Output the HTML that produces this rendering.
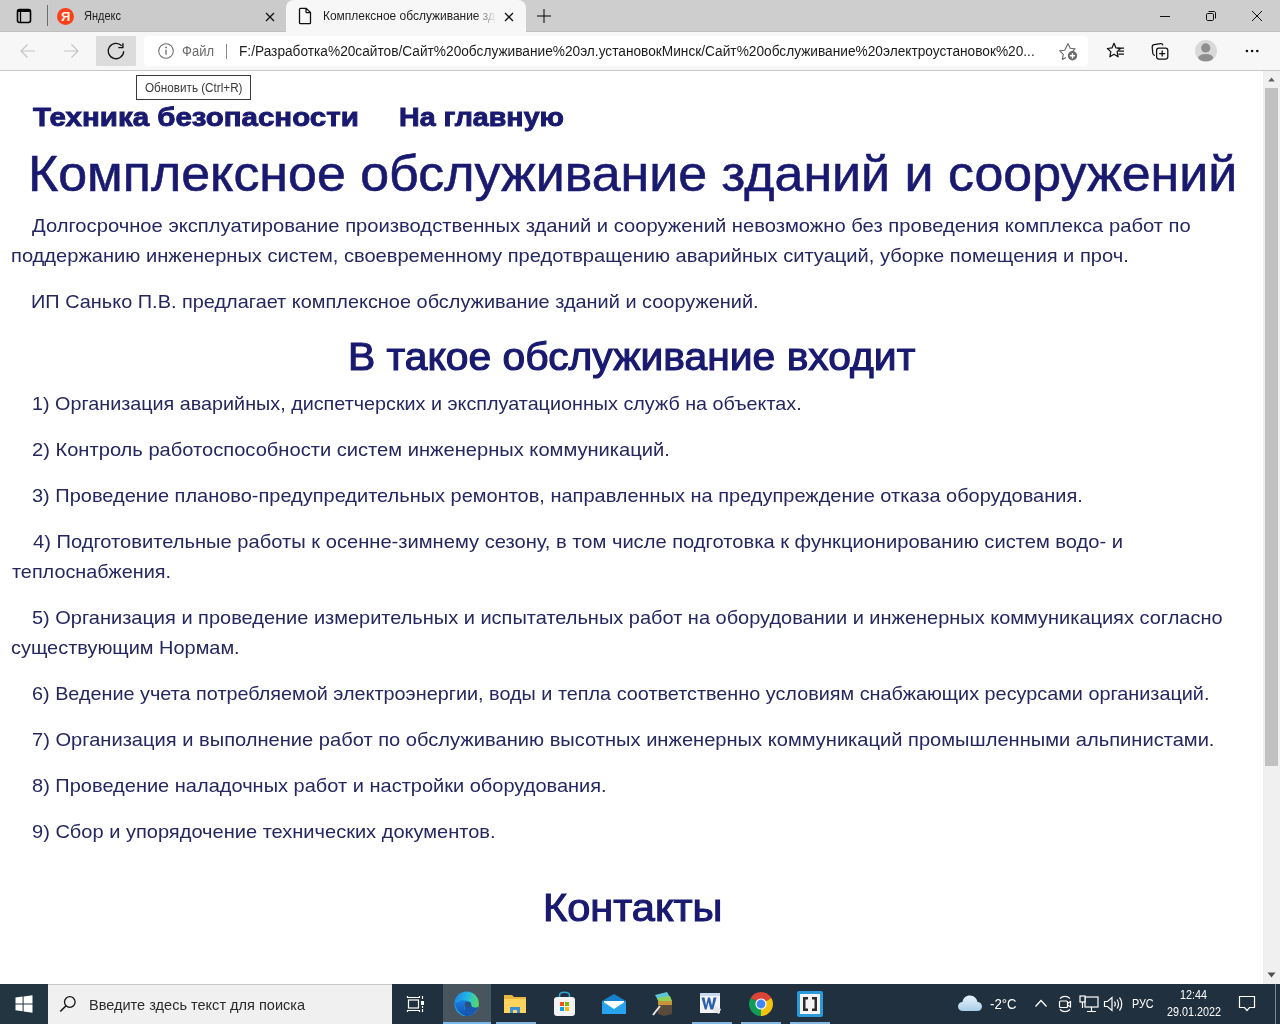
<!DOCTYPE html>
<html><head><meta charset="utf-8"><title>Комплексное обслуживание</title>
<style>
html,body{margin:0;padding:0}
body{width:1280px;height:1024px;position:relative;overflow:hidden;background:#fff;font-family:"Liberation Sans",sans-serif}
.a{position:absolute}
.t{position:absolute;white-space:nowrap;line-height:1;transform-origin:0 0}
.b{font-size:19.0px;color:#262660}
.h{color:#191970}
</style></head><body>

<!-- ===== TAB STRIP ===== -->
<div class="a" style="left:0;top:0;width:1280px;height:32px;background:#cecece"></div><div class="a" style="left:0;top:31px;width:1280px;height:1px;background:#bfbfbf"></div>
<!-- tab actions icon -->
<svg class="a" style="left:16px;top:8px" width="16" height="16" viewBox="0 0 16 16"><rect x="1.5" y="1.5" width="13" height="13" rx="2" fill="none" stroke="#000" stroke-width="1.6"/><rect x="1.5" y="1.5" width="13" height="2.5" fill="#000"/><line x1="4.5" y1="3" x2="4.5" y2="14" stroke="#000" stroke-width="1.3"/></svg>
<div class="a" style="left:47px;top:5px;width:1px;height:21px;background:#6d6d6d"></div>
<!-- inactive tab -->
<div class="a" style="left:49px;top:0;width:237px;height:31px;background:#cbcbcb;border-radius:0 0 5px 0"></div>
<div class="a" style="left:57px;top:8px;width:17px;height:17px;border-radius:50%;background:#fc3f1d"></div><div class="t" style="left:61px;top:10px;font-size:13px;font-weight:bold;color:#fff5e0">Я</div>
<div class="t" style="left:84px;top:10px;font-size:12px;color:#1e1e1e;transform:scaleX(0.917)">Яндекс</div>
<svg class="a" style="left:265px;top:12px" width="10" height="10" viewBox="0 0 10 10"><path d="M1 1L9 9M9 1L1 9" stroke="#111" stroke-width="1.3"/></svg>
<!-- active tab -->
<div class="a" style="left:286px;top:0;width:240px;height:40px;background:#f7f7f7;border-radius:8px 8px 0 0"></div>
<svg class="a" style="left:298px;top:7px" width="14" height="18" viewBox="0 0 14 18"><path d="M1.5 2.2c0-.5.4-.9.9-.9h5.8l4.3 4.3v10.2c0 .5-.4.9-.9.9H2.4c-.5 0-.9-.4-.9-.9z M8 1.5v3.3c0 .5.4.9.9.9h3.4" fill="none" stroke="#111" stroke-width="1.3"/></svg>
<div style="position:absolute;left:323px;top:0;width:174px;height:32px;overflow:hidden;-webkit-mask-image:linear-gradient(90deg,#000 152px,transparent 173px)"><div class="t" style="left:0;top:10px;font-size:12px;color:#1e1e1e;transform:scaleX(0.997)">Комплексное обслуживание здан</div></div>
<svg class="a" style="left:504px;top:12px" width="10" height="10" viewBox="0 0 10 10"><path d="M1 1L9 9M9 1L1 9" stroke="#111" stroke-width="1.3"/></svg>
<svg class="a" style="left:536px;top:8px" width="16" height="16" viewBox="0 0 16 16"><path d="M8 1V15M1 8H15" stroke="#000" stroke-width="1"/></svg>
<!-- window controls -->
<div class="a" style="left:1160px;top:16px;width:10px;height:1px;background:#111"></div>
<svg class="a" style="left:1205px;top:10px" width="12" height="12" viewBox="0 0 12 12"><rect x="1.5" y="3.5" width="7" height="7" rx="1.2" fill="none" stroke="#111" stroke-width="1"/><path d="M3.5 1.5H9c.8 0 1.5.7 1.5 1.5V8.5" fill="none" stroke="#111" stroke-width="1"/></svg>
<svg class="a" style="left:1251px;top:10px" width="12" height="12" viewBox="0 0 12 12"><path d="M1 1L11 11M11 1L1 11" stroke="#111" stroke-width="1"/></svg>

<!-- ===== TOOLBAR ===== -->
<div class="a" style="left:0;top:32px;width:1280px;height:38px;background:#f7f7f7"></div>
<div class="a" style="left:0;top:70px;width:1280px;height:1px;background:#c6c6c6"></div>
<svg class="a" style="left:19px;top:42px" width="18" height="18" viewBox="0 0 18 18"><path d="M16 9H2M8.5 2.5L2 9l6.5 6.5" fill="none" stroke="#c4c4c4" stroke-width="1.2"/></svg>
<svg class="a" style="left:62px;top:42px" width="18" height="18" viewBox="0 0 18 18"><path d="M2 9h14M9.5 2.5L16 9l-6.5 6.5" fill="none" stroke="#c4c4c4" stroke-width="1.2"/></svg>
<div class="a" style="left:96px;top:36px;width:40px;height:30px;background:#dcdcdc;border-radius:1px"></div>
<svg class="a" style="left:107px;top:42px" width="18" height="18" viewBox="0 0 18 18"><path d="M16.7 9.3A7.7 7.7 0 1 1 14.6 3.7" fill="none" stroke="#111" stroke-width="1.3"/><path d="M15.9 1.2V5.6H11.3" fill="none" stroke="#111" stroke-width="1.4"/></svg>
<div class="a" style="left:144px;top:36px;width:944px;height:30px;background:#fff;border-radius:4px"></div>
<svg class="a" style="left:157px;top:42px" width="18" height="18" viewBox="0 0 18 18"><circle cx="9" cy="9" r="7.3" fill="none" stroke="#6e6e6e" stroke-width="1.1"/><path d="M9 7.8v5" stroke="#6e6e6e" stroke-width="1.3"/><circle cx="9" cy="5.4" r=".9" fill="#6e6e6e"/></svg>
<div class="t" style="left:182px;top:44px;font-size:14px;color:#6c6c6c;transform:scaleX(0.93)">Файл</div>
<div class="a" style="left:226px;top:44px;width:1px;height:15px;background:#8a8a8a"></div>
<div class="t" style="left:239px;top:44px;font-size:14px;color:#1b1b1b;transform:scaleX(0.978)">F:/Разработка%20сайтов/Сайт%20обслуживание%20эл.установокМинск/Сайт%20обслуживание%20электроустановок%20...</div>
<svg class="a" style="left:1057px;top:41px" width="22" height="22" viewBox="0 0 22 22"><path d="M11 2.6l2.2 4.6 4.9.7-3.5 3.4.3 1.6M9 16.5l-3.6 1.9.9-5-3.6-3.5 5-.7L11 2.6" fill="none" stroke="#6b6b6b" stroke-width="1.15" stroke-linejoin="round"/><circle cx="15.5" cy="14.8" r="4.7" fill="#6b6b6b"/><path d="M15.5 12.2v5.2M12.9 14.8h5.2" stroke="#fff" stroke-width="1.4"/></svg>
<svg class="a" style="left:1106px;top:42px" width="20" height="18" viewBox="0 0 20 18"><path d="M8 1.3l2 4.6 4.4.6-3.3 3.1 1 5.2L8 12.3l-4.1 2.5.9-5.2L1.4 6.5l4.6-.6z" fill="none" stroke="#111" stroke-width="1.25" stroke-linejoin="round"/><path d="M11.5 6.2h6.5M12.5 9.2h5.5M12.5 12.2h5.5" stroke="#111" stroke-width="1.25"/></svg>
<svg class="a" style="left:1151px;top:42px" width="19" height="19" viewBox="0 0 19 19"><path d="M4 13.5C2.8 13.4 2 12.5 1.8 11.4L1.2 5.3c-.1-1.3.8-2.4 2.1-2.6l6.2-1c1.2-.2 2.2.5 2.5 1.6" fill="none" stroke="#111" stroke-width="1.25"/><rect x="5.6" y="6.2" width="11.2" height="10.8" rx="2.2" fill="none" stroke="#111" stroke-width="1.25"/><path d="M11.2 8.6v6M8.2 11.6h6" stroke="#111" stroke-width="1.3"/></svg>
<svg class="a" style="left:1195px;top:40px" width="22" height="22" viewBox="0 0 22 22"><circle cx="11" cy="11" r="11" fill="#d9d9d9"/><circle cx="10.7" cy="7.9" r="4.6" fill="#8e8e8e"/><ellipse cx="10.7" cy="17.6" rx="7.4" ry="3.7" fill="#8e8e8e"/></svg>
<svg class="a" style="left:1242px;top:48px" width="20" height="6" viewBox="0 0 20 6"><circle cx="4.9" cy="3" r="1.3" fill="#111"/><circle cx="10.1" cy="3" r="1.3" fill="#111"/><circle cx="15.3" cy="3" r="1.3" fill="#111"/></svg>

<!-- ===== CONTENT ===== -->
<div id="content">
<div class="t h" style="left:33px;top:104px;transform:scaleX(1.134);font-size:26px;font-weight:bold;-webkit-text-stroke:0.9px #191970">Техника безопасности</div>
<div class="t h" style="left:399px;top:104px;transform:scaleX(1.1);font-size:26px;font-weight:bold;-webkit-text-stroke:0.9px #191970">На главную</div>
<div class="t h" style="left:28px;top:149px;transform:scaleX(1.0383);font-size:50px;-webkit-text-stroke:0.6px #191970">Комплексное обслуживание зданий и сооружений</div>

<div class="t b" style="left:32.4px;top:216px;transform:scaleX(1.0623)">Долгосрочное эксплуатирование производственных зданий и сооружений невозможно без проведения комплекса работ по</div>
<div class="t b" style="left:11.4px;top:246px;transform:scaleX(1.0572)">поддержанию инженерных систем, своевременному предотвращению аварийных ситуаций, уборке помещения и проч.</div>
<div class="t b" style="left:30.8px;top:292px;transform:scaleX(1.0483)">ИП Санько П.В. предлагает комплексное обслуживание зданий и сооружений.</div>

<div class="t h" style="left:348px;top:338px;transform:scaleX(1.074);font-size:38px;-webkit-text-stroke:1.1px #191970">В такое обслуживание входит</div>

<div class="t b" style="left:32.0px;top:394px;transform:scaleX(1.0405)">1) Организация аварийных, диспетчерских и эксплуатационных служб на объектах.</div>
<div class="t b" style="left:31.8px;top:440px;transform:scaleX(1.0586)">2) Контроль работоспособности систем инженерных коммуникаций.</div>
<div class="t b" style="left:31.8px;top:486px;transform:scaleX(1.0517)">3) Проведение планово-предупредительных ремонтов, направленных на предупреждение отказа оборудования.</div>
<div class="t b" style="left:32.8px;top:532px;transform:scaleX(1.0594)">4) Подготовительные работы к осенне-зимнему сезону, в том числе подготовка к функционированию систем водо- и</div>
<div class="t b" style="left:12.4px;top:562px;transform:scaleX(1.0434)">теплоснабжения.</div>
<div class="t b" style="left:31.8px;top:608px;transform:scaleX(1.0518)">5) Организация и проведение измерительных и испытательных работ на оборудовании и инженерных коммуникациях согласно</div>
<div class="t b" style="left:11.4px;top:638px;transform:scaleX(1.0487)">существующим Нормам.</div>
<div class="t b" style="left:31.8px;top:684px;transform:scaleX(1.0433)">6) Ведение учета потребляемой электроэнергии, воды и тепла соответственно условиям снабжающих ресурсами организаций.</div>
<div class="t b" style="left:31.8px;top:730px;transform:scaleX(1.0576)">7) Организация и выполнение работ по обслуживанию высотных инженерных коммуникаций промышленными альпинистами.</div>
<div class="t b" style="left:31.8px;top:776px;transform:scaleX(1.0532)">8) Проведение наладочных работ и настройки оборудования.</div>
<div class="t b" style="left:31.8px;top:822px;transform:scaleX(1.0544)">9) Сбор и упорядочение технических документов.</div>

<div class="t h" style="left:543px;top:888px;transform:scaleX(1.065);font-size:39px;-webkit-text-stroke:1.1px #191970">Контакты</div>
</div>

<!-- ===== TOOLTIP ===== -->
<div class="a" style="left:136px;top:75px;width:113px;height:23px;border:1px solid #3a3a3a;background:#fff"></div>
<div class="t" style="left:145px;top:82px;font-size:12px;color:#383838;transform:scaleX(0.975)">Обновить (Ctrl+R)</div>

<!-- ===== SCROLLBAR ===== -->
<div class="a" style="left:1263px;top:71px;width:17px;height:913px;background:#f0f0f0"></div>
<svg class="a" style="left:1263px;top:73px" width="17" height="12" viewBox="0 0 17 12"><path d="M5.2 8.6L8.5 4.6 11.8 8.6z" fill="#606060"/></svg>
<div class="a" style="left:1265px;top:88px;width:13px;height:678px;background:#c1c1c1"></div>
<svg class="a" style="left:1263px;top:970px" width="17" height="12" viewBox="0 0 17 12"><path d="M4.5 2.5L8.5 7.5 12.5 2.5z" fill="#505050"/></svg>

<!-- ===== TASKBAR ===== -->
<div class="a" style="left:0;top:984px;width:1280px;height:40px;background:#20303f"></div>
<div class="a" style="left:0;top:984px;width:48px;height:40px;background:#233540"></div>
<svg class="a" style="left:15px;top:995px" width="18" height="18" viewBox="0 0 18 18"><path d="M0.5 2.6L7.6 1.6V8.4H0.5z M8.6 1.4L17.5 0.2V8.4H8.6z M0.5 9.4H7.6V16.3L0.5 15.3z M8.6 9.4H17.5V17.7L8.6 16.5z" fill="#fff"/></svg>
<div class="a" style="left:48px;top:984px;width:344px;height:40px;background:#f0f0f0;box-shadow:inset 0 1px 0 #c9c9c9"></div>
<svg class="a" style="left:58px;top:994px" width="20" height="20" viewBox="0 0 20 20"><circle cx="11.8" cy="8" r="5.3" fill="none" stroke="#111" stroke-width="1.3"/><path d="M8 11.8L2.3 17.5" stroke="#111" stroke-width="1.5"/></svg>
<div class="t" style="left:89px;top:997px;font-size:15px;color:#2b2b2b;transform:scaleX(0.969)">Введите здесь текст для поиска</div>
<!-- task view -->
<svg class="a" style="left:406px;top:995px" width="20" height="18" viewBox="0 0 20 18"><path d="M1.5 1v1.5h12V1M1.5 17v-1.5h12V17" fill="none" stroke="#fff" stroke-width="1.2"/><rect x="2.5" y="5" width="10" height="8" fill="none" stroke="#fff" stroke-width="1.2"/><path d="M16.5 1v3M16.5 14v3" stroke="#fff" stroke-width="1.2"/><rect x="15" y="6" width="3" height="4" fill="#fff"/><path d="M16.5 11v2" stroke="#fff" stroke-width="1.2"/></svg>
<!-- edge -->
<div class="a" style="left:443px;top:984px;width:48px;height:40px;background:#48555f"></div>
<div class="a" style="left:443px;top:1022px;width:48px;height:2px;background:#7db8ec"></div>
<svg class="a" style="left:454px;top:991px" width="26" height="26" viewBox="0 0 26 26"><defs><linearGradient id="eg1" x1="0" y1=".3" x2="1" y2=".6"><stop offset="0" stop-color="#1b86e6"/><stop offset=".45" stop-color="#22b6e6"/><stop offset=".75" stop-color="#3fd09a"/><stop offset="1" stop-color="#62d655"/></linearGradient><linearGradient id="eg2" x1="0" y1="0" x2="0" y2="1"><stop offset="0" stop-color="#1a7fe0"/><stop offset="1" stop-color="#134fae"/></linearGradient></defs><circle cx="12.6" cy="12.8" r="12.3" fill="url(#eg1)"/><path d="M1 11.5C1.5 17.5 6 24.5 12.6 25.1c3.5.2 7-1.2 9.3-3.6-3 1.2-6.5 1.5-9-.3-2.5-1.8-3.5-4.5-2.5-7.2.7-2 2.3-3.3 4-3.5-3-1.5-7-1.6-9.5.3C3 11.5 1.8 12.5 1 11.5z" fill="url(#eg2)"/><path d="M10.5 14.2c0-2.3 1.6-3.8 3.6-3.8s3.3 1.6 3.3 3c-.2 1.6 1 3 3.6 3.2 1.4.1 2.6-.3 3.6-1.1-.7 3.2-2.5 5.5-4.5 6.5-2.5 1.4-6 1.3-8-.5-1.5-1.4-1.8-4-1.6-7.3z" fill="#1a58b0"/><ellipse cx="13.6" cy="13.6" rx="2.8" ry="2.9" fill="#2d4f78"/></svg>
<!-- explorer -->
<div class="a" style="left:496px;top:1022px;width:40px;height:2px;background:#84b6e0"></div>
<svg class="a" style="left:503px;top:993px" width="24" height="22" viewBox="0 0 24 22"><path d="M1 2h8l2 2h12v16H1z" fill="#e8b83e"/><rect x="1" y="6" width="22" height="14" fill="#ffd35c"/><path d="M7 20v-6h10v6h-3v-3h-4v3z" fill="#3a8fd8"/></svg>
<!-- store -->
<svg class="a" style="left:552px;top:991px" width="25" height="26" viewBox="0 0 25 26"><path d="M7.5 7V4.5c0-2 1.5-3.2 5-3.2s5 1.2 5 3.2V7" fill="none" stroke="#2ea7d8" stroke-width="1.6"/><rect x="2" y="6" width="21" height="19" rx="3" fill="#f3f3f3"/><rect x="8" y="11" width="4" height="4" fill="#f25022"/><rect x="13" y="11" width="4" height="4" fill="#7fba00"/><rect x="8" y="16" width="4" height="4" fill="#00a4ef"/><rect x="13" y="16" width="4" height="4" fill="#ffb900"/></svg>
<!-- mail -->
<svg class="a" style="left:601px;top:993px" width="26" height="22" viewBox="0 0 26 22"><path d="M1 8L13 1 25 8v13H1z" fill="#1680c8"/><path d="M3 8h20v10H3z" fill="#fff"/><path d="M1 8l12 8 12-8v13H1z" fill="#28a4ee"/></svg>
<!-- archive -->
<svg class="a" style="left:650px;top:991px" width="26" height="26" viewBox="0 0 26 26"><path d="M5 4l12-3 3 5-12 3z" fill="#5cc6d8"/><path d="M7 7l13-2 2 5-13 2z" fill="#8ed05a"/><path d="M8 10h14v13l-8 2-6-2z" fill="#5a4a3c"/><path d="M8 10h14v4H8z" fill="#c8943a"/><path d="M3 24l7-9" stroke="#e8e8e8" stroke-width="2"/></svg>
<!-- word -->
<div class="a" style="left:692px;top:1022px;width:40px;height:2px;background:#84b6e0"></div>
<svg class="a" style="left:699px;top:992px" width="24" height="24" viewBox="0 0 24 24"><rect x="1" y="1" width="20" height="20" fill="#f4f4f4"/><rect x="1" y="1" width="20" height="3" fill="#c9d9ef"/><path d="M2.5 5.5h3l1.5 8 2-8h2l2 8 1.5-8h3l-3.3 12h-2.8l-1.9-7.5-1.9 7.5H5.8z" fill="#2b5fb4"/><path d="M16 14l6 3-2 5-6-3z" fill="#e6e6e6"/></svg>
<!-- chrome -->
<div class="a" style="left:741px;top:1022px;width:40px;height:2px;background:#84b6e0"></div>
<svg class="a" style="left:748px;top:991px" width="26" height="26" viewBox="0 0 26 26"><path d="M13 13L23.39 7A12 12 0 0 0 2.61 7Z" fill="#db4437"/><path d="M13 13L2.61 7A12 12 0 0 0 13 25Z" fill="#0f9d58"/><path d="M13 13L13 25A12 12 0 0 0 23.39 7Z" fill="#f4c20d"/><circle cx="13" cy="13" r="5.6" fill="#fff"/><circle cx="13" cy="13" r="4.4" fill="#4285f4"/></svg>
<!-- brackets -->
<div class="a" style="left:790px;top:1022px;width:40px;height:2px;background:#84b6e0"></div>
<svg class="a" style="left:797px;top:991px" width="26" height="26" viewBox="0 0 26 26"><rect x="0" y="0" width="26" height="26" rx="2" fill="#2c9ad8"/><rect x="3" y="3" width="20" height="20" fill="#f4f4f4"/><path d="M6 6h5v2.5H8.5v9H11V20H6z M20 6h-5v2.5h2.5v9H15V20h5z" fill="#2d2d2d"/></svg>

<!-- tray -->
<svg class="a" style="left:957px;top:993px" width="26" height="20" viewBox="0 0 26 20"><defs><linearGradient id="cg" x1="0" y1="0" x2="0" y2="1"><stop offset="0" stop-color="#e8f4fc"/><stop offset="1" stop-color="#a8cde8"/></linearGradient></defs><path d="M6 18c-3 0-5-2-5-4.5S3 9 5.5 9C6 5 9 2.5 13 2.5s7 3 7.5 6.5c2.5 0 4.5 2 4.5 4.5S23 18 20.5 18z" fill="url(#cg)"/></svg>
<div class="t" style="left:990px;top:997px;font-size:14px;color:#fff;transform:scaleX(0.94)">-2°C</div>
<svg class="a" style="left:1034px;top:998px" width="14" height="10" viewBox="0 0 14 10"><path d="M1.5 8.5L7 2.5l5.5 6" fill="none" stroke="#fff" stroke-width="1.3"/></svg>
<svg class="a" style="left:1056px;top:995px" width="18" height="18" viewBox="0 0 18 18"><path d="M4 3.5A7 7 0 0 1 14 3.5M4 14.5A7 7 0 0 0 14 14.5" fill="none" stroke="#fff" stroke-width="1.1"/><rect x="3.5" y="6" width="8" height="6.5" rx="1" fill="none" stroke="#fff" stroke-width="1.2"/><path d="M11.5 8.5l3-2v5.5l-3-2" fill="none" stroke="#fff" stroke-width="1.2"/></svg>
<svg class="a" style="left:1079px;top:995px" width="20" height="18" viewBox="0 0 20 18"><rect x="6" y="2" width="13" height="10" fill="none" stroke="#fff" stroke-width="1.2"/><rect x="1" y="1" width="5" height="6" fill="#20303f" stroke="#fff" stroke-width="1.2"/><path d="M12.5 12v4M8 16.5h9M3.5 7v6" stroke="#fff" stroke-width="1.2"/></svg>
<svg class="a" style="left:1103px;top:995px" width="20" height="18" viewBox="0 0 20 18"><path d="M1.5 6.5h3l4.5-4v13l-4.5-4h-3z" fill="none" stroke="#fff" stroke-width="1.2"/><path d="M11.5 6.5c1 1.5 1 3.5 0 5M14 4.5c2 2.5 2 6.5 0 9M16.5 2.5c3 3.5 3 9.5 0 13" fill="none" stroke="#fff" stroke-width="1.2"/></svg>
<div class="t" style="left:1132px;top:998px;font-size:12px;color:#fff;transform:scaleX(0.903)">РУС</div>
<div class="t" style="left:1180px;top:989px;font-size:12px;color:#fff;transform:scaleX(0.9)">12:44</div>
<div class="t" style="left:1167px;top:1006px;font-size:12px;color:#fff;transform:scaleX(0.9)">29.01.2022</div>
<svg class="a" style="left:1238px;top:995px" width="18" height="18" viewBox="0 0 18 18"><path d="M1.5 1.5h15v11h-5l-2.5 3-2.5-3h-5z" fill="none" stroke="#fff" stroke-width="1.2"/></svg>
<div class="a" style="left:1275px;top:984px;width:1px;height:40px;background:#7a8694"></div>

</body></html>
